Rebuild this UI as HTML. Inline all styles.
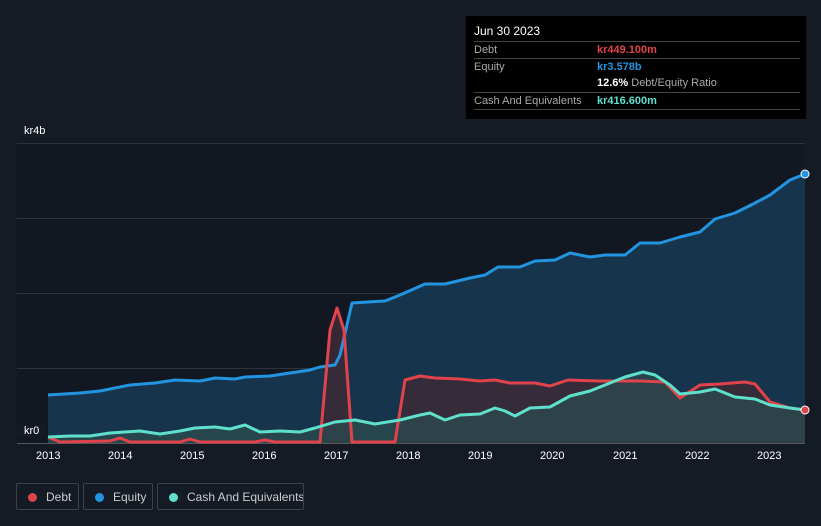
<!DOCTYPE html><html><head><style>
body{margin:0;background:#151b25;width:821px;height:526px;overflow:hidden;font-family:"Liberation Sans",sans-serif;position:relative}
.tt{position:absolute;left:466px;top:16px;width:340px;height:103px;background:#000;color:#fff;font-size:11px}
.row{position:absolute;left:8px;width:326px;border-top:1px solid #444;height:17px;line-height:17px}
.l{color:#aaa;position:absolute;left:0}.v{position:absolute;left:123px;font-weight:bold}
.lg{position:absolute;top:483px;height:27px;border:1px solid #3c424b;border-radius:2px;color:#ccc;font-size:12px;line-height:27px;box-sizing:border-box;white-space:nowrap;overflow:hidden}
.d{display:inline-block;width:9px;height:9px;border-radius:50%;margin:0 9px 0 11px;vertical-align:-1px}
.ax{position:absolute;color:#fff;font-size:11px}
</style></head><body>
<svg width="821" height="526" style="position:absolute;left:0;top:0">
<rect x="17" y="143" width="788" height="300" fill="#111821"/>
<g stroke="#2c333d" stroke-width="1"><line x1="17" y1="143.5" x2="805" y2="143.5"/><line x1="17" y1="218.5" x2="805" y2="218.5"/><line x1="17" y1="293.5" x2="805" y2="293.5"/><line x1="17" y1="368.5" x2="805" y2="368.5"/><line x1="17" y1="443.5" x2="805" y2="443.5" stroke="#555"/></g>
<polygon fill="#17344d" points="48,443 48,395 80,393 100,391 130,385 155,383 175,380 200,381 215,378 235,379 245,377 270,376 290,373 310,370 320,367 335,365 340,355 352,303 385,301 400,295 425,284 445,284 470,278 485,275 498,267 520,267 535,261 555,260 570,253 590,257 605,255 625,255 640,243 660,243 680,237 700,232 715,219 735,213 755,203 770,195 790,180 805,174 805,443"/>
<polygon fill="#3a2a36" opacity="0.9" points="320,443 330,330 337,308 344,330 352,443 395,443 405,380 420,376 435,378 460,379 480,381 495,380 510,383 535,383 550,386 568,380 600,381 640,381 665,382 680,398 700,385 720,384 745,382 755,384 770,402 790,408 805,410 805,443"/>
<polygon fill="#2c4a4e" opacity="0.8" points="48,443 48,437 70,436 90,436 110,433 140,431 160,434 180,431 195,428 215,427 230,429 245,425 260,432 280,431 300,432 315,428 335,422 355,420 375,424 400,420 420,415 430,413 445,420 460,415 480,414 495,408 505,411 515,416 530,408 550,407 570,396 590,391 605,385 625,377 643,372 655,375 670,385 680,394 700,392 715,389 735,397 755,399 770,405 790,408 805,410 805,443"/>
<polyline fill="none" stroke="#2394e0" stroke-width="3" stroke-linejoin="round" points="48,395 80,393 100,391 130,385 155,383 175,380 200,381 215,378 235,379 245,377 270,376 290,373 310,370 320,367 335,365 340,355 352,303 385,301 400,295 425,284 445,284 470,278 485,275 498,267 520,267 535,261 555,260 570,253 590,257 605,255 625,255 640,243 660,243 680,237 700,232 715,219 735,213 755,203 770,195 790,180 805,174"/>
<polyline fill="none" stroke="#e0434b" stroke-width="3" stroke-linejoin="round" points="48,437 60,442 110,441 120,438 130,442 180,442 190,439 200,442 255,442 265,440 275,442 320,442 330,330 337,308 344,330 352,442 395,442 405,380 420,376 435,378 460,379 480,381 495,380 510,383 535,383 550,386 568,380 600,381 640,381 665,382 680,398 700,385 720,384 745,382 755,384 770,402 790,408 805,410"/>
<polyline fill="none" stroke="#5ee0cc" stroke-width="3" stroke-linejoin="round" points="48,437 70,436 90,436 110,433 140,431 160,434 180,431 195,428 215,427 230,429 245,425 260,432 280,431 300,432 315,428 335,422 355,420 375,424 400,420 420,415 430,413 445,420 460,415 480,414 495,408 505,411 515,416 530,408 550,407 570,396 590,391 605,385 625,377 643,372 655,375 670,385 680,394 700,392 715,389 735,397 755,399 770,405 790,408 805,410"/>
<circle cx="805" cy="174" r="4" fill="#2394e0" stroke="#fff" stroke-width="1"/>
<circle cx="805" cy="410" r="4" fill="#e0434b" stroke="#fff" stroke-width="1"/>
</svg>
<div class="tt">
<div style="position:absolute;left:8px;top:8px;font-size:12px">Jun 30 2023</div>
<div class="row" style="top:25px"><span class="l">Debt</span><span class="v" style="color:#e0434b">kr449.100m</span></div>
<div class="row" style="top:42px"><span class="l">Equity</span><span class="v" style="color:#2394e0">kr3.578b</span></div>
<div class="row" style="top:59px;border:0"><span class="v" style="color:#fff">12.6% <span style="color:#aaa;font-weight:normal">Debt/Equity Ratio</span></span></div>
<div class="row" style="top:76px"><span class="l">Cash And Equivalents</span><span class="v" style="color:#5ee0cc">kr416.600m</span></div>
<div style="position:absolute;left:8px;top:93px;width:326px;border-top:1px solid #444"></div>
</div>
<div class="ax" style="left:24px;top:125px">kr4b</div>
<div class="ax" style="left:17px;top:425px;background:#151b25;padding:0 7px">kr0</div>
<div class="ax" style="left:36px;top:450px">2013</div><div class="ax" style="left:108px;top:450px">2014</div><div class="ax" style="left:180px;top:450px">2015</div><div class="ax" style="left:252px;top:450px">2016</div><div class="ax" style="left:324px;top:450px">2017</div><div class="ax" style="left:396px;top:450px">2018</div><div class="ax" style="left:468px;top:450px">2019</div><div class="ax" style="left:540px;top:450px">2020</div><div class="ax" style="left:613px;top:450px">2021</div><div class="ax" style="left:685px;top:450px">2022</div><div class="ax" style="left:757px;top:450px">2023</div>
<div class="lg" style="left:16px;width:63px"><span class="d" style="background:#e0434b"></span>Debt</div>
<div class="lg" style="left:83px;width:70px"><span class="d" style="background:#2394e0"></span>Equity</div>
<div class="lg" style="left:157px;width:147px"><span class="d" style="background:#5ee0cc"></span>Cash And Equivalents</div>
</body></html>
